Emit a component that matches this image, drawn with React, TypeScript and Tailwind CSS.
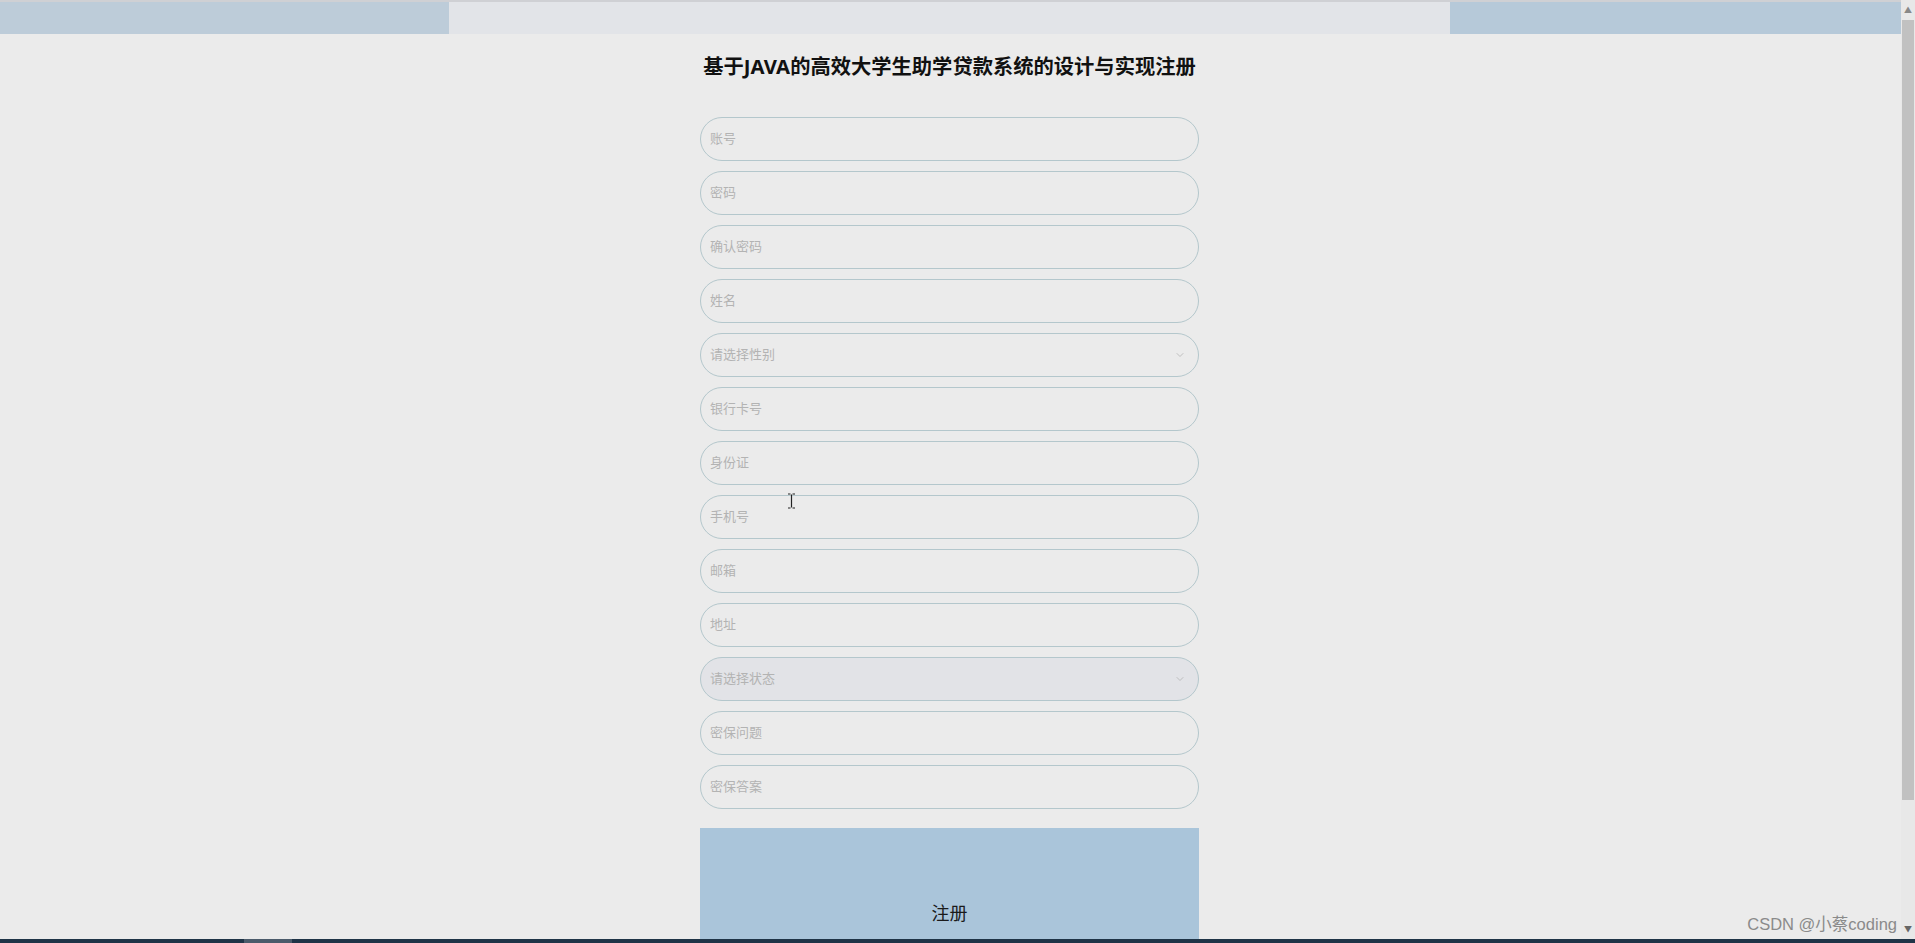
import { ChevronDown } from 'lucide-react'

const fields = [
  { label: '账号' },
  { label: '密码' },
  { label: '确认密码' },
  { label: '姓名' },
  { label: '请选择性别', select: true },
  { label: '银行卡号' },
  { label: '身份证' },
  { label: '手机号' },
  { label: '邮箱' },
  { label: '地址' },
  { label: '请选择状态', select: true, shaded: true },
  { label: '密保问题' },
  { label: '密保答案' },
]

function Field({ label, select, shaded }: { label: string; select?: boolean; shaded?: boolean }) {
  return (
    <div
      className={`h-[44px] w-[499px] rounded-full border border-[#b4c7cc] flex items-center justify-between pl-[9px] pr-[12px] ${
        shaded ? 'bg-[#e2e3e7]' : 'bg-[#ebebeb]'
      }`}
    >
      <span className="text-[13px] text-[#b3b3b3]">{label}</span>
      {select && <ChevronDown className="w-3 h-3 text-[#b0b0b0]" strokeWidth={1.5} />}
    </div>
  )
}

export default function App() {
  return (
    <div
      className="relative h-[943px] w-full flex overflow-hidden bg-[#ebebeb]"
      style={{ fontFamily: '"Noto Sans", "Noto Sans CJK SC", sans-serif' }}
    >
      {/* page */}
      <div className="flex-1 flex flex-col">
        {/* top strip */}
        <div className="w-full h-[34px] flex border-t-2 border-[#cfd0d4] shrink-0">
          <div className="w-[449px] bg-[#bdccd9]" />
          <div className="flex-1 bg-[#e2e4e8]" />
          <div className="w-[451px] bg-[#b6c9d9]" />
        </div>

        <div className="flex flex-col items-center pr-[2px]">
          <h1 className="mt-[18px] h-[28px] leading-[28px] text-[20.3px] font-bold text-[#111]">
            基于JAVA的高效大学生助学贷款系统的设计与实现注册
          </h1>

          <div className="mt-[37px] flex flex-col gap-[10px]">
            {fields.map((f) => (
              <Field key={f.label} {...f} />
            ))}
          </div>

          <button className="mt-[19px] w-[499px] h-[170px] shrink-0 bg-[#aac5da] text-[18px] text-[#1a1a1a] flex items-center justify-center">
            注册
          </button>
        </div>
      </div>

      {/* scrollbar */}
      <div className="w-[14px] shrink-0 bg-[#e8e8e8] flex flex-col items-center">
        <span className="text-[8px] leading-[20px] text-[#888]">▲</span>
        <div className="w-[12px] h-[780px] bg-[#c1c1c1]" />
      </div>

      {/* text cursor */}
      <svg className="absolute left-[787px] top-[493px]" width="9" height="16" viewBox="0 0 9 16">
        <path d="M1 1h2.5M5.5 1H8M4.5 1.5v13M1 15h2.5M5.5 15H8" stroke="#222" strokeWidth="1.2" fill="none" />
      </svg>

      {/* watermark */}
      <div className="absolute right-[18px] bottom-[6px] text-[16.5px] text-[#8a8a8a]" style={{ fontFamily: '"Liberation Sans", "Noto Sans CJK SC", sans-serif' }}>
        CSDN @小蔡coding
      </div>
      <span className="absolute right-[3px] bottom-[8px] text-[8px] text-[#666]">▼</span>

      {/* bottom taskbar edge */}
      <div className="absolute left-0 right-0 bottom-0 h-[4px] bg-[#1f3447] flex">
        <div className="ml-[244px] w-[48px] bg-[#4b5b6b]" />
      </div>
    </div>
  )
}
